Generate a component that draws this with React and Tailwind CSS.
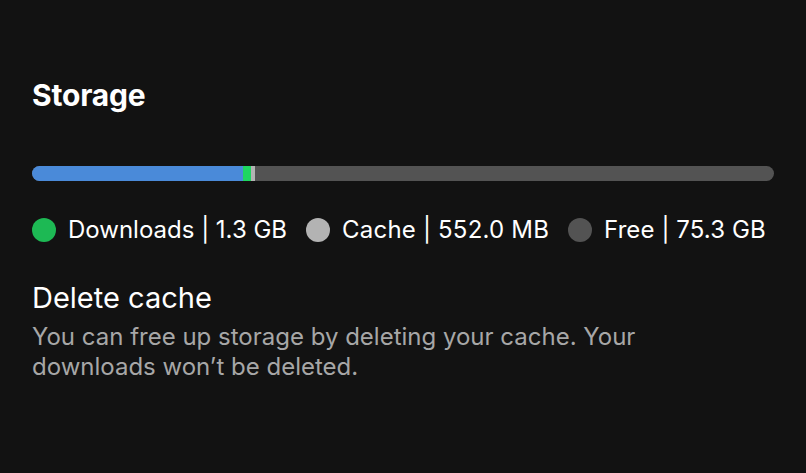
export default function App() {
  return (
    <div className="w-[806px] h-[473px] bg-[#121212] px-[32px] pt-[76px]" style={{ fontFamily: "Inter, 'Noto Sans', sans-serif" }}>
      <h1 className="text-[30px] font-bold text-white leading-[38px] tracking-[-0.2px]">Storage</h1>
      <div className="mt-[52px] flex h-[15px] w-[742px] overflow-hidden rounded-full bg-[#535353]">
        <div className="w-[211px] bg-[#4a8ad9]" />
        <div className="w-[8px] bg-[#1ed760]" />
        <div className="w-[4px] bg-[#b3b3b3]" />
      </div>
      <div className="mt-[34px] flex items-center text-[24px] text-white leading-[30px]">
        <span className="h-[24px] w-[24px] shrink-0 rounded-full bg-[#1db954]" />
        <span className="ml-[12px]">Downloads | 1.3 GB</span>
        <span className="ml-[19px] h-[24px] w-[24px] shrink-0 rounded-full bg-[#b3b3b3]" />
        <span className="ml-[12px] tracking-[0.2px]">Cache | 552.0 MB</span>
        <span className="ml-[19px] h-[24px] w-[24px] shrink-0 rounded-full bg-[#535353]" />
        <span className="ml-[12px] tracking-[0.1px]">Free | 75.3 GB</span>
      </div>
      <div className="mt-[35px] text-[29px] text-white leading-[36px]">Delete cache</div>
      <p className="mt-[6px] w-[640px] text-[24px] leading-[30px] text-[#a7a7a7]">
        You can free up storage by deleting your cache. Your downloads won’t be deleted.
      </p>
    </div>
  );
}
